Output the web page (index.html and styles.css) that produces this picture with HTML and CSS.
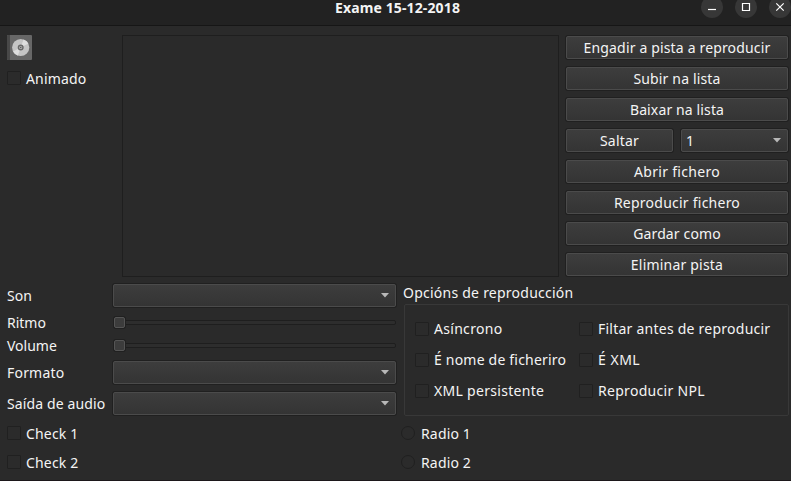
FILE: index.html
```html
<!DOCTYPE html>
<html lang="gl">
<head>
<meta charset="utf-8">
<title>Exame 15-12-2018</title>
<link rel="stylesheet" href="styles.css">
</head>
<body>
<div class="window">
  <header class="titlebar">
    <h1>Exame 15-12-2018</h1>
    <div class="controls">
      <span class="control"><svg viewBox="0 0 22 22"><path d="M7 13.5h8"/></svg></span>
      <span class="control"><svg viewBox="0 0 22 22"><path d="M7.5 7.5h7v7h-7z"/></svg></span>
      <span class="control"><svg viewBox="0 0 22 22"><path d="M7.3 7.3l7.4 7.4M14.7 7.3l-7.4 7.4"/></svg></span>
    </div>
  </header>
  <main>
    <section class="top">
      <div class="side">
        <svg class="disc" viewBox="0 0 25 25">
          <rect width="25" height="25" rx="1" fill="#676767"/>
          <path d="M0 1a1 1 0 0 1 1-1h2v25H1a1 1 0 0 1-1-1z" fill="#484848"/>
          <circle cx="13.7" cy="12.5" r="8.6" fill="#c5c5c5"/>
          <path d="M13.7 12.5L16.5 4.4A8.6 8.6 0 0 1 21.4 8.6zM13.7 12.5L10.9 20.6A8.6 8.6 0 0 1 6 16.4z" fill="#dedede"/>
          <circle cx="13.7" cy="12.5" r="2.3" fill="#b5b5b5" stroke="#686868" stroke-width="1.4"/>
          <circle cx="13.7" cy="12.5" r=".8" fill="#5c5c5c"/>
        </svg>
        <label class="option low"><i class="box"></i><span class="t-animado">Animado</span></label>
      </div>
      <div class="playlist"></div>
      <div class="actions">
        <div class="btn"><span class="t-engadir">Engadir a pista a reproducir</span></div>
        <div class="btn"><span class="t-subir">Subir na lista</span></div>
        <div class="btn"><span class="t-baixar">Baixar na lista</span></div>
        <div class="pair">
          <div class="btn"><span class="t-saltar">Saltar</span></div>
          <div class="btn combo"><span>1</span><svg class="arrow" viewBox="0 0 8 5"><path d="M0 0h8L4 4.5z"/></svg></div>
        </div>
        <div class="btn"><span class="t-abrir">Abrir fichero</span></div>
        <div class="btn"><span class="t-reproducir">Reproducir fichero</span></div>
        <div class="btn"><span class="t-gardar">Gardar como</span></div>
        <div class="btn"><span class="t-eliminar">Eliminar pista</span></div>
      </div>
    </section>
    <section class="middle">
      <div class="form">
        <span class="t-son">Son</span><div class="btn combo"><svg class="arrow" viewBox="0 0 8 5"><path d="M0 0h8L4 4.5z"/></svg></div>
        <span class="t-ritmo">Ritmo</span><div class="slider"><i class="handle"></i></div>
        <span class="t-volume">Volume</span><div class="slider"><i class="handle"></i></div>
        <span class="t-formato">Formato</span><div class="btn combo"><svg class="arrow" viewBox="0 0 8 5"><path d="M0 0h8L4 4.5z"/></svg></div>
        <span class="t-saida">Saída de audio</span><div class="btn combo"><svg class="arrow" viewBox="0 0 8 5"><path d="M0 0h8L4 4.5z"/></svg></div>
      </div>
      <div class="group">
        <h2><span class="t-opcions">Opcións de reproducción</span></h2>
        <div class="frame">
          <label class="option"><i class="box"></i><span class="t-asincrono">Asíncrono</span></label>
          <label class="option"><i class="box"></i><span class="t-filtar">Filtar antes de reproducir</span></label>
          <label class="option"><i class="box"></i><span class="t-nome">É nome de ficheriro</span></label>
          <label class="option"><i class="box"></i><span class="t-exml">É XML</span></label>
          <label class="option"><i class="box"></i><span class="t-persistente">XML persistente</span></label>
          <label class="option"><i class="box"></i><span class="t-npl">Reproducir NPL</span></label>
        </div>
      </div>
    </section>
    <section class="bottom">
      <label class="option low"><i class="box"></i><span class="t-check">Check 1</span></label>
      <label class="option low radio"><i class="box"></i><span class="t-radio">Radio 1</span></label>
      <label class="option low"><i class="box"></i><span class="t-check">Check 2</span></label>
      <label class="option low radio"><i class="box"></i><span class="t-radio">Radio 2</span></label>
    </section>
  </main>
</div>
</body>
</html>
```
FILE: styles.css
```css
* { box-sizing: border-box; }
body { margin: 0; background: #2a2a2a; color: #f4f4f4; font: 14px/20px "Noto Sans", sans-serif; white-space: nowrap; }
.window { height: 481px; border-bottom: 1px solid #1c171a; }
.titlebar { display: grid; grid-template-columns: 1fr auto; height: 26px; background: #222; border-bottom: 1px solid #161616; }
h1 { grid-area: 1 / 1 / 2 / 3; margin: 0 0 0 4px; text-align: center; font-size: 14px; line-height: 16px; font-weight: 700; letter-spacing: .13px; }
.controls { grid-area: 1 / 2; display: flex; gap: 12px; margin-top: -4px; }
.control { width: 22px; height: 22px; border-radius: 50%; background: #373737; }
.control svg { display: block; width: 22px; height: 22px; fill: none; stroke: #fff; stroke-width: 1.2; }
main { padding: 9px 3px 0 7px; }
.top { display: flex; height: 242px; }
.side { width: 115px; }
.disc { display: block; width: 25px; height: 25px; margin-bottom: 8px; }
.playlist { width: 437px; border: 1px solid #1e1e1e; margin-right: 7px; }
.actions { flex: 1; display: flex; flex-direction: column; gap: 8px; padding-top: 1px; }
.btn { height: 23px; border: 1px solid #4b4b4b; border-radius: 2px; background: linear-gradient(#3d3d3d, #343434); box-shadow: 0 0 0 1px #202020; display: flex; align-items: center; justify-content: center; line-height: 20px; }
.pair { display: grid; grid-template-columns: 107px 107px; gap: 8px; }
.combo { justify-content: space-between; padding: 0 6px 0 4px; }
.arrow { width: 8px; height: 5px; fill: #b8b8b8; margin-left: auto; }
.middle { display: flex; margin-top: 7px; height: 132px; }
.form { width: 389px; display: grid; grid-template-columns: 106px 283px; grid-template-rows: 23px 15px 15px 23px 23px; row-gap: 8px; align-items: center; align-content: start; line-height: 19px; }
.slider { height: 5px; border: 1px solid #1e1e1e; border-radius: 2px; background: #2d2d2d; display: flex; align-items: center; }
.handle { width: 11px; height: 11px; flex: none; border: 1px solid #555; border-radius: 2px; background: #3c3c3c; box-shadow: 0 0 0 1px #202020; }
.group { flex: 1; margin: -1px -1px 0 8px; }
h2 { font: inherit; margin: 0 0 0 -1px; height: 21px; line-height: 20px; }
.frame { height: 112px; border: 1px solid #383838; border-radius: 2px; padding: 9px 0 0 10px; display: grid; grid-template-columns: 164px 1fr; grid-auto-rows: 31px; }
.option { display: flex; align-items: center; height: 20px; }
.frame .option { height: 31px; margin-top: -1px; }
.low span { padding-top: 2px; }
.box { width: 14px; height: 14px; border: 1px solid #202020; border-radius: 1px; background: #2b2b2b; margin-right: 5px; flex: none; }
.radio .box { border-radius: 50%; margin-right: 6px; }
.bottom { display: grid; grid-template-columns: 394px 1fr; grid-auto-rows: 29px; padding-top: 7px; }
.t-gardar, .t-baixar, .t-saida { letter-spacing: .13px; }
.t-engadir, .t-subir, .t-animado, .t-check, .t-radio { letter-spacing: .16px; }
.t-nome, .t-eliminar, .t-saltar { letter-spacing: .2px; }
.t-filtar, .t-opcions, .t-reproducir { letter-spacing: .24px; }
.t-asincrono, .t-abrir, .t-persistente, .t-npl { letter-spacing: .3px; }
.t-exml { letter-spacing: .5px; }
.t-formato { letter-spacing: .2px; }
```
